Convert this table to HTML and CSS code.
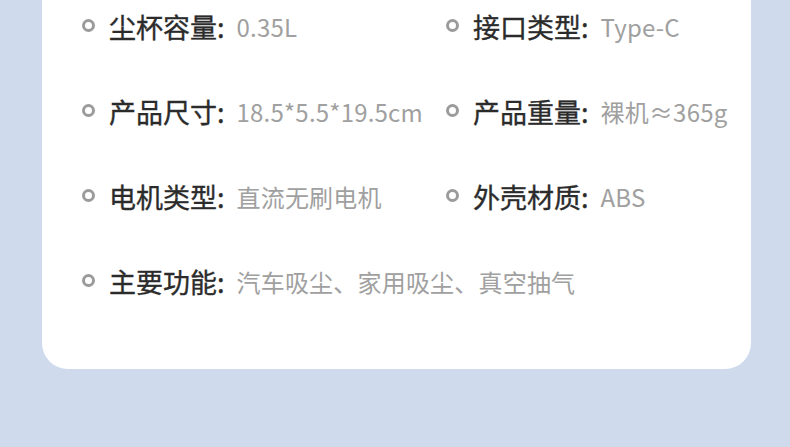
FILE: index.html
```html
<!DOCTYPE html>
<html lang="zh-CN">
<head>
    <meta charset="UTF-8">
    <meta name="viewport" content="width=device-width, initial-scale=1.0">
    <title>产品参数</title>
    <link rel="stylesheet" href="styles.css">
</head>
<body>
    <div class="card">
        <ul class="specs">
            <li><span class="dot"></span><span class="label">尘杯容量:</span><span class="value">0.35L</span></li>
            <li><span class="dot"></span><span class="label">接口类型:</span><span class="value">Type-C</span></li>
            <li><span class="dot"></span><span class="label">产品尺寸:</span><span class="value">18.5*5.5*19.5cm</span></li>
            <li><span class="dot"></span><span class="label">产品重量:</span><span class="value">裸机≈365g</span></li>
            <li><span class="dot"></span><span class="label">电机类型:</span><span class="value">直流无刷电机</span></li>
            <li><span class="dot"></span><span class="label">外壳材质:</span><span class="value">ABS</span></li>
            <li class="wide"><span class="dot"></span><span class="label">主要功能:</span><span class="value">汽车吸尘、家用吸尘、真空抽气</span></li>
        </ul>
    </div>
</body>
</html>
```

FILE: styles.css
```css
body {
    font-family: "Noto Sans CJK SC", "Noto Sans", sans-serif;
    background-color: #cfdaed;
    margin: 0;
    padding: 0;
}

.card {
    background-color: #ffffff;
    margin-left: 42px;
    width: 709px;
    border-radius: 0 0 26px 26px;
    padding: 0 0 61px 40px;
    box-sizing: border-box;
}

.specs {
    list-style: none;
    margin: -1px 0 0 0;
    padding: 0;
    display: grid;
    grid-template-columns: 364px 1fr;
    grid-auto-rows: 54px;
    row-gap: 31px;
}

.specs li {
    display: flex;
    align-items: center;
    white-space: nowrap;
}

.specs li.wide {
    grid-column: 1 / -1;
}

.dot {
    width: 13px;
    height: 13px;
    border: 3px solid #9b9b9b;
    border-radius: 50%;
    box-sizing: border-box;
    margin-right: 14px;
    margin-top: -2px;
    flex-shrink: 0;
}

.label {
    font-size: 27px;
    font-weight: 400;
    -webkit-text-stroke: 0.35px #2b2b2b;
    color: #2b2b2b;
    margin-right: 12px;
}

.value {
    font-size: 24px;
    letter-spacing: 0.2px;
    color: #a0a0a0;
}
```
